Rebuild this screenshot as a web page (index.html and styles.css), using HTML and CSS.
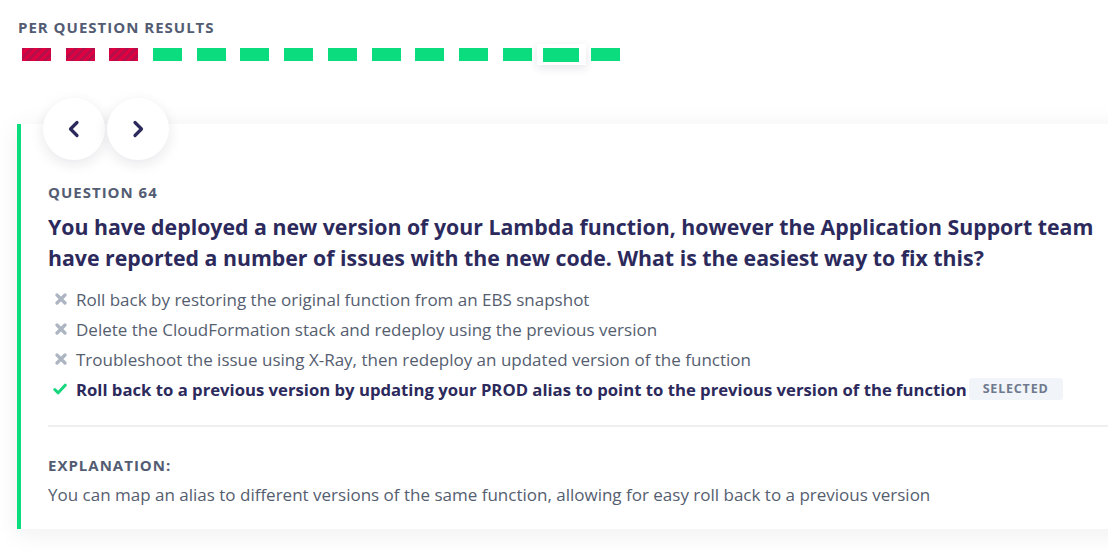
FILE: index.html
```html
<!DOCTYPE html>
<html>
<head>
<meta charset="utf-8">
<link rel="stylesheet" href="styles.css">
</head>
<body>
<div class="page">
  <section class="results">
    <h2 class="results-title">PER QUESTION RESULTS</h2>
    <div class="bars">
      <span class="bar wrong"></span>
      <span class="bar wrong"></span>
      <span class="bar wrong"></span>
      <span class="bar right"></span>
      <span class="bar right"></span>
      <span class="bar right"></span>
      <span class="bar right"></span>
      <span class="bar right"></span>
      <span class="bar right"></span>
      <span class="bar right"></span>
      <span class="bar right"></span>
      <span class="bar right"></span>
      <span class="bar-current"><span class="bar right big"></span></span>
      <span class="bar right"></span>
    </div>
  </section>

  <section class="card">
    <div class="nav">
      <button class="nav-btn" aria-label="Previous">
        <svg width="14" height="18" viewBox="0 0 14 18"><path d="M10 2.5 L3.5 9 L10 15.5" fill="none" stroke="#2c2a5c" stroke-width="3.2" stroke-linecap="round" stroke-linejoin="round"/></svg>
      </button>
      <button class="nav-btn" aria-label="Next">
        <svg width="14" height="18" viewBox="0 0 14 18"><path d="M4 2.5 L10.5 9 L4 15.5" fill="none" stroke="#2c2a5c" stroke-width="3.2" stroke-linecap="round" stroke-linejoin="round"/></svg>
      </button>
    </div>

    <div class="label">QUESTION 64</div>
    <h1 class="question">You have deployed a new version of your Lambda function, however the Application Support team have reported a number of issues with the new code. What is the easiest way to fix this?</h1>

    <ul class="answers">
      <li class="answer">
        <svg class="icon" width="12" height="12" viewBox="0 0 12 12"><path d="M2 2 L10 10 M10 2 L2 10" stroke="#adb5c2" stroke-width="3.2" stroke-linecap="round"/></svg>
        <span>Roll back by restoring the original function from an EBS snapshot</span>
      </li>
      <li class="answer">
        <svg class="icon" width="12" height="12" viewBox="0 0 12 12"><path d="M2 2 L10 10 M10 2 L2 10" stroke="#adb5c2" stroke-width="3.2" stroke-linecap="round"/></svg>
        <span>Delete the CloudFormation stack and redeploy using the previous version</span>
      </li>
      <li class="answer">
        <svg class="icon" width="12" height="12" viewBox="0 0 12 12"><path d="M2 2 L10 10 M10 2 L2 10" stroke="#adb5c2" stroke-width="3.2" stroke-linecap="round"/></svg>
        <span>Troubleshoot the issue using X-Ray, then redeploy an updated version of the function</span>
      </li>
      <li class="answer correct">
        <svg class="icon" width="14" height="12" viewBox="0 0 14 12"><path d="M1.8 6.5 L5.2 9.8 L12.2 2.2" fill="none" stroke="#17d67d" stroke-width="3" stroke-linecap="round" stroke-linejoin="round"/></svg>
        <span>Roll back to a previous version by updating your PROD alias to point to the previous version of the function</span>
        <span class="badge">SELECTED</span>
      </li>
    </ul>

    <hr class="divider">

    <div class="label">EXPLANATION:</div>
    <p class="explanation">You can map an alias to different versions of the same function, allowing for easy roll back to a previous version</p>
  </section>
</div>
</body>
</html>
```
FILE: styles.css
```css
html, body {
  margin: 0;
  padding: 0;
  overflow: hidden;
  background: #ffffff;
}

body {
  font-family: "Open Sans", "DejaVu Sans", sans-serif;
  color: #535c72;
}

.page {
  width: 1108px;
  height: 551px;
  overflow: hidden;
}

.results {
  padding: 17px 0 0 18px;
}

.results-title {
  margin: 0;
  font-size: 15px;
  font-weight: 700;
  letter-spacing: 1px;
  color: #535c72;
  line-height: 20px;
}

.bars {
  display: flex;
  align-items: center;
  gap: 14.7px;
  margin: 7px 0 0 4px;
  height: 21px;
}

.bar {
  display: block;
  width: 29px;
  height: 13px;
  flex: none;
}

.bar.right {
  background: #0bdd7f;
}

.bar.wrong {
  background: repeating-linear-gradient(-45deg, #de0040 0 3px, #b50f4b 3px 6px);
}

.bar-current {
  display: flex;
  flex: none;
  padding: 4px 7px 3px 6px;
  margin: 0 -9.7px;
  background: #fff;
  box-shadow: 0 3px 10px rgba(40, 40, 70, 0.12);
}

.bar.big {
  width: 36px;
  height: 14px;
}

.card {
  position: relative;
  margin: 59px 0 0 17px;
  width: 1120px;
  background: #fff;
  border-left: 4px solid #0bdd7f;
  padding: 52px 0 22px 27px;
  box-shadow: 0 4px 24px rgba(30, 30, 60, 0.07);
  box-sizing: border-box;
}

.nav {
  position: absolute;
  top: -26px;
  left: 22px;
  display: flex;
  gap: 2px;
}

.nav-btn {
  width: 62px;
  height: 62px;
  border-radius: 50%;
  border: none;
  background: #fff;
  box-shadow: 0 4px 14px rgba(30, 30, 60, 0.10);
  display: flex;
  align-items: center;
  justify-content: center;
  padding: 0;
}

.label {
  font-size: 15px;
  font-weight: 700;
  letter-spacing: 1px;
  color: #535c72;
  line-height: 20px;
  margin-top: 6px;
}

.question {
  margin: 9px 0 0 0;
  font-size: 21.3px;
  font-weight: 700;
  line-height: 31px;
  color: #2c2a5c;
  width: 1060px;
}

.answers {
  list-style: none;
  margin: 11px 0 0 0;
  padding: 0;
}

.answer {
  display: flex;
  align-items: center;
  height: 30px;
  font-size: 17px;
  color: #555e70;
}

.answer .icon {
  flex: none;
  margin: 0 9px 0 7px;
}

.answer.correct {
  font-weight: 700;
  font-size: 16.7px;
  color: #2c2a5c;
}

.answer.correct .icon {
  margin: 0 9px 0 5px;
}

.badge {
  margin-left: 2px;
  background: #f1f4f8;
  color: #6f7a8e;
  font-size: 12.5px;
  font-weight: 700;
  letter-spacing: 0.8px;
  padding: 0 14px;
  height: 22px;
  line-height: 22px;
  border-radius: 3px;
}

.divider {
  border: none;
  border-top: 2px solid #efefef;
  margin: 21px 0 0 0;
}

.divider + .label {
  margin-top: 28px;
}

.explanation {
  margin: 8px 0 0 0;
  font-size: 17px;
  line-height: 24px;
  color: #555e70;
}
```
